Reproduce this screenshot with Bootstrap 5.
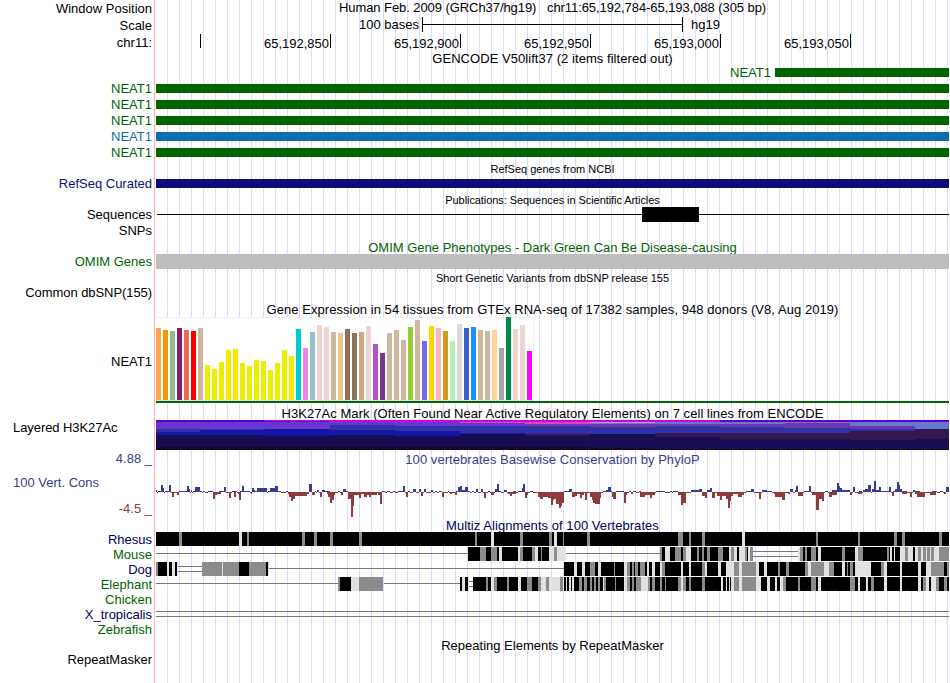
<!DOCTYPE html>
<html lang="en">
<head>
  <meta charset="UTF-8">
  <meta name="viewport" content="width=device-width, initial-scale=1.0">
  <title>chr11:65,192,784-65,193,088</title>
  <link href="https://cdn.jsdelivr.net/npm/bootstrap@5.3.0/dist/css/bootstrap.min.css" rel="stylesheet">
  <style>
    body { font-family: "Liberation Sans", Arial, sans-serif; font-size: 13px; color: #000; background: #fff; }
    .browser {
      width: 950px; height: 683px;
      background:
        linear-gradient(#ffb4b4, #ffb4b4) 154px 0 / 1px 100% no-repeat,
        repeating-linear-gradient(to right, transparent 0 11px, #dcdcfa 11px 12px) 156px 0 / 793px 100% no-repeat;
    }
    .track { height: 16px; line-height: 16px; white-space: nowrap; }
    .side { width: 156px; padding-right: 4px; flex: none; text-align: right; }
    .plot { width: 793px; flex: none; }
    .side-left { text-align: left; padding-left: 13px; }
    .h14 { height: 14px; }
    .h15 { height: 15px; line-height: 15px; }
    .h17 { height: 17px; line-height: 17px; }
    .h30 { height: 30px; line-height: 16px; }
    .line-13 { line-height: 13px; }
    .line-15 { line-height: 15px; }
    .line-17 { line-height: 17px; }
    .line-18 { line-height: 18px; }
    .line-19 { line-height: 19px; }
    .line-20 { line-height: 20px; }
    .wide { letter-spacing: .05px; }
    .tight { letter-spacing: -.07px; }
    .tiny { font-size: 11px; }
    .gene { height: 9px; margin-top: 4px; }
    .green { color: #006400; }
    .blue { color: #0c6eaf; }
    .navy { color: #0c0c78; }
    .species { color: #00005a; }
    .cons { color: #3c3c8c; }
    .red { color: #8c3c3c; }
    .bg-gene { background: #006400; }
    .bg-alt { background: #0c6eaf; }
    .bg-refseq { background: #0c0c78; }
    .bg-omim { background: #bebebe; height: 15px; }
    .ruler span { width: 130px; height: 14px; border-right: 1px solid #000; padding-right: 1px; text-align: right; line-height: 19px; flex: none; }
    .ruler span:first-child { width: 45px; }
    .scale-text { width: 266px; padding-right: 3px; text-align: right; }
    .gene-text { width: 619px; padding-right: 4px; text-align: right; }
    .gtex { height: 86px; }
    .gtex .side { line-height: 89px; }
    .phylop { height: 50px; line-height: 16px; }
    svg { display: block; shape-rendering: crispEdges; }
  </style>
</head>
<body>
  <div class="browser overflow-hidden">
    <div class="track h17 d-flex">
      <div class="side">Window Position</div>
      <div class="plot text-center tight line-15">Human Feb. 2009 (GRCh37/hg19) &nbsp; chr11:65,192,784-65,193,088 (305 bp)</div>
    </div>
    <div class="track h17 d-flex">
      <div class="side">Scale</div>
      <div class="plot d-flex line-15">
        <div class="scale-text">100 bases</div>
        <svg width="261" height="15"><path d="M0.5 0V15M260.5 0V15M0 7.5H261" stroke="#000" fill="none"/></svg>
        <div class="ps-2 ms-0">hg19</div>
      </div>
    </div>
    <div class="track d-flex line-18">
      <div class="side">chr11:</div>
      <div class="plot ruler d-flex"><span></span><span>65,192,850</span><span>65,192,900</span><span>65,192,950</span><span>65,193,000</span><span>65,193,050</span></div>
    </div>
    <div class="track h14 d-flex">
      <div class="side"></div>
      <div class="plot text-center wide line-18">GENCODE V50lift37 (2 items filtered out)</div>
    </div>
    <div class="track d-flex green line-18">
      <div class="side"></div>
      <div class="plot d-flex"><div class="gene-text">NEAT1</div><div class="gene bg-gene flex-grow-1"></div></div>
    </div>
    <div class="track d-flex green line-18"><div class="side">NEAT1</div><div class="plot gene bg-gene"></div></div>
    <div class="track d-flex green line-18"><div class="side">NEAT1</div><div class="plot gene bg-gene"></div></div>
    <div class="track d-flex green line-18"><div class="side">NEAT1</div><div class="plot gene bg-gene"></div></div>
    <div class="track d-flex blue line-18"><div class="side">NEAT1</div><div class="plot gene bg-alt"></div></div>
    <div class="track d-flex green line-18"><div class="side">NEAT1</div><div class="plot gene bg-gene"></div></div>

    <div class="track h15 d-flex">
      <div class="side"></div>
      <div class="plot text-center tiny line-18">RefSeq genes from NCBI</div>
    </div>
    <div class="track d-flex navy line-18"><div class="side">RefSeq Curated</div><div class="plot gene bg-refseq"></div></div>
    <div class="track h15 d-flex">
      <div class="side"></div>
      <div class="plot text-center tiny tight line-18">Publications: Sequences in Scientific Articles</div>
    </div>
    <div class="track d-flex line-18">
      <div class="side">Sequences</div>
      <svg class="plot" height="16" viewBox="156 206 793 16"><path d="M157 214.5H949" stroke="#000"/><rect x="642" y="207" width="57" height="15"/></svg>
    </div>
    <div class="track d-flex line-18"><div class="side">SNPs</div></div>
    <div class="track d-flex">
      <div class="side"></div>
      <div class="plot text-center green line-20">OMIM Gene Phenotypes - Dark Green Can Be Disease-causing</div>
    </div>
    <div class="track d-flex green"><div class="side">OMIM Genes</div><div class="plot bg-omim"></div></div>
    <div class="track h15 d-flex">
      <div class="side"></div>
      <div class="plot text-center tiny line-17">Short Genetic Variants from dbSNP release 155</div>
    </div>
    <div class="track d-flex"><div class="side tight">Common dbSNP(155)</div></div>
    <div class="track d-flex">
      <div class="side"></div>
      <div class="plot text-center wide line-18">Gene Expression in 54 tissues from GTEx RNA-seq of 17382 samples, 948 donors (V8, Aug 2019)</div>
    </div>
    <div class="track gtex d-flex">
      <div class="side">NEAT1</div>
      <svg id="gtex" class="plot" height="86" viewBox="156 317 793 86"></svg>
    </div>
    <div class="track h17 d-flex">
      <div class="side"></div>
      <div class="plot text-center wide pt-1 lh-1">H3K27Ac Mark (Often Found Near Active Regulatory Elements) on 7 cell lines from ENCODE</div>
    </div>
    <div class="track h30 d-flex">
      <div class="side side-left tight">Layered H3K27Ac</div>
      <svg id="h3k" class="plot" height="30" viewBox="156 420 793 30"></svg>
    </div>
    <div class="track h17 d-flex cons">
      <div class="side">4.88 _</div>
      <div class="plot text-center wide line-19">100 vertebrates Basewise Conservation by PhyloP</div>
    </div>
    <div class="track phylop d-flex">
      <div class="side d-flex flex-column justify-content-between">
        <div class="cons side-left pt-2">100 Vert. Cons</div>
        <div class="red">-4.5 _</div>
      </div>
      <svg id="phylop" class="plot" height="50" viewBox="156 467 793 50"></svg>
    </div>
    <div class="track h15 d-flex">
      <div class="side"></div>
      <div class="plot text-center species wide line-18">Multiz Alignments of 100 Vertebrates</div>
    </div>
    <div id="multiz"></div>
    <div class="track d-flex">
      <div class="side"></div>
      <div class="plot text-center line-18">Repeating Elements by RepeatMasker</div>
    </div>
    <div class="track h15 d-flex line-13"><div class="side">RepeatMasker</div></div>
  </div>

  <script src="https://cdn.jsdelivr.net/npm/bootstrap@5.3.0/dist/js/bootstrap.bundle.min.js"></script>
  <script>
    const rect = (x, y, w, h, fill) => `<rect x="${x}" y="${y}" width="${w}" height="${h}" fill="${fill}"/>`;

    // GTEx: one bar per tissue, [top, colour]
    const tan = '#cdb79e', rose = '#eed5d2', yellow = '#eeee00';
    const tissues = [
      [328, '#ffa54f'], [330, '#ee9a00'], [331, '#8fbc8f'], [328, '#8b1c62'], [330, '#ee6a50'], [331, '#ff0000'], [328, tan],
      ...[365, 369, 362, 350, 349, 363, 366, 360, 361, 370, 363, 350, 356].map(t => [t, yellow]),
      [329, '#00cdcd'], [348, '#ee82ee'], [332, '#9ac0cd'], [325, rose], [327, rose], [332, tan], [333, '#eec591'],
      [329, '#8b7355'], [333, '#8b7355'], [332, '#cdaa7d'], [326, rose], [344, '#b452cd'], [353, '#7a378b'],
      [333, tan], [330, tan], [340, tan], [327, '#9acd32'], [320, tan], [341, '#7a67ee'], [326, '#ffd700'],
      [328, '#ffb6c1'], [331, '#cd9b1d'], [341, '#b4eeb4'], [324, '#d9d9d9'], [328, '#3a5fcd'], [327, '#1e90ff'],
      [330, tan], [331, tan], [330, '#ffd39b'], [348, '#a6a6a6'], [317, '#008b45'], [329, rose], [325, rose], [351, '#ff00ff']
    ];
    let out = rect(156, 317, 378, 84, '#f0f0f0') + rect(157, 318, 376, 82, '#fff') + rect(156, 318, 1, 82, '#fff') + rect(156, 400, 378, 1, '#dcdcdc');
    tissues.forEach(([top, c], i) => out += rect(156 + i * 7, top, 5, 400 - top, c));
    document.getElementById('gtex').innerHTML = out + rect(156, 401, 793, 2, '#006400');

    // H3K27Ac: each segment is [x, layer, bottom, layer, bottom, ...]
    const ink = { V: '#5a00d2', M: '#d200dc', K: '#180828', P: '#6936d2', I: '#3030a8', B: '#1616a6', D: '#180c52', R: '#331850', L: '#6478d0', Q: '#6e38a8', N: '#d746c8', W: '#c896f0' };
    const layers = [
      [156, 'V422 P429 I432 B435 D447 K450'],
      [200, 'V422 P429 I430 B435 D447 K450'],
      [265, 'M421 V422 P429 B436 D447 K450'],
      [330, 'M422 P425 I430 B435 D447 K450'],
      [395, 'M422 P426 I431 B436 D447 K450'],
      [460, 'M422 N423 P426 I433 B434 D447 K450'],
      [525, 'M422 N424 Q426 I434 R436 D447 K450'],
      [590, 'M422 W423 L424 Q427 I434 D448 K450'],
      [655, 'M422 L424 Q426 I433 R437 D449 K450'],
      [720, 'V422 L424 Q427 I433 R439 D449 K450'],
      [785, 'V422 L423 Q428 I433 R439 D449 K450'],
      [850, 'V422 L426 Q429 I431 R440 D449 K450'],
      [915, 'V422 L429 R439 D449 K450'],
      [949, '']
    ];
    out = '';
    for (let i = 0; i < layers.length - 1; i++) {
      let y = 420;
      for (const s of layers[i][1].split(' ')) {
        const b = +s.slice(1);
        out += rect(layers[i][0], y, layers[i + 1][0] - layers[i][0], b - y, ink[s[0]]);
        y = b;
      }
    }
    document.getElementById('h3k').innerHTML = out;

    // PhyloP: x,width,height triples above and below the zero line
    const up = '156,1,2 158,3,1 161,2,7 163,1,4 165,4,1 169,2,7 179,8,1 187,2,6 189,1,3 191,1,2 193,2,1 195,5,5 200,2,1 203,2,1 208,5,1 219,5,1 224,2,5 232,5,1 240,2,1 242,2,6 244,6,1 252,2,4 254,1,2 255,2,1 257,10,4 268,2,1 270,5,4 275,3,6 278,3,1 286,2,1 309,3,8 315,1,1 317,2,2 322,3,2 325,5,1 338,2,1 343,3,3 346,2,1 382,3,1 387,3,1 393,2,1 398,5,1 403,2,6 408,2,1 413,3,3 419,2,3 424,2,3 431,2,2 435,2,1 439,3,1 448,1,1 456,2,1 458,2,5 460,2,6 462,3,2 465,3,5 468,2,1 472,2,1 476,2,3 481,2,3 488,2,1 495,2,3 497,2,8 499,2,1 504,3,2 513,3,1 518,4,1 522,1,4 523,2,8 530,3,1 564,5,1 569,3,3 603,3,1 606,2,2 608,3,5 611,1,1 616,8,1 629,2,1 633,3,1 639,2,1 656,9,1 670,2,1 673,5,1 691,8,2 699,3,3 707,3,2 710,2,4 746,5,1 751,3,3 762,5,2 767,5,1 790,3,3 795,1,2 796,2,6 804,5,1 809,2,6 825,3,1 832,5,2 837,2,9 839,1,6 840,2,4 842,8,2 853,2,5 859,3,1 863,2,2 865,3,3 868,3,7 872,2,3 874,2,11 876,3,2 879,2,5 881,8,1 889,2,5 893,2,1 895,2,3 897,2,10 899,1,7 900,2,3 902,5,1 913,2,2 915,5,1 932,5,1 940,3,1 946,3,5';
    const down = '172,2,5 177,2,3 213,2,7 215,2,3 217,4,2 229,2,6 234,2,5 238,1,2 239,2,8 251,1,2 288,1,2 289,2,5 291,2,9 293,2,7 295,6,4 301,6,4 307,2,2 312,3,3 320,2,5 327,1,2 328,2,5 330,2,11 332,2,8 334,1,3 341,2,3 348,3,7 351,2,23 353,1,14 354,5,3 359,2,6 361,3,2 364,3,5 367,6,3 369,2,5 373,4,3 378,2,3 380,2,12 406,2,5 421,2,4 442,2,5 450,2,2 455,2,3 484,2,6 491,3,3 508,2,2 510,2,4 512,4,2 525,2,6 527,1,3 538,2,5 540,3,7 543,5,5 548,3,6 551,2,13 553,1,8 554,2,7 556,3,12 559,2,16 561,1,14 562,2,11 572,3,5 575,2,4 577,3,2 580,2,6 582,2,3 585,2,8 590,2,5 592,1,8 593,2,11 595,5,12 600,1,6 612,2,5 613,3,7 624,2,11 626,1,3 631,2,2 640,5,5 645,5,3 650,2,6 652,3,3 678,3,3 681,2,13 683,3,11 702,3,4 705,2,6 712,3,6 717,3,4 720,2,8 722,4,4 726,2,7 728,2,16 730,1,9 731,2,4 733,5,2 738,4,5 742,2,3 759,2,7 774,2,2 775,7,5 782,3,8 788,2,2 798,5,4 812,4,3 816,3,18 819,3,7 822,2,9 829,3,5 832,5,3 850,2,3 858,4,2 892,2,4 902,5,2 910,2,5 915,2,2 917,8,5 930,6,3 944,2,2';
    const parse = s => s.split(' ').map(t => t.split(',').map(Number));
    const ups = parse(up);
    out = '';
    for (let x = 156; x < 949; x++) {
      if (!ups.some(u => x >= u[0] && x < u[0] + u[1])) out += rect(x, 492, 1, 1, '#8c3c3c');
    }
    ups.forEach(([x, w, h]) => out += rect(x, 492 - h, w, h, '#3c3c8c'));
    parse(down).forEach(([x, w, h]) => out += rect(x, 492, w, h, '#8c3c3c'));
    document.getElementById('phylop').innerHTML = out + rect(351, 515, 2, 2, '#ff00ff');

    // Multiz: k black, g grey, l light block; s single, d double gap line; n nothing
    const species = [
      ['Rhesus', 'species', 'k156 g179 k182 l239 k242 g247 k249 g302 k305 g314 k317 g330 k333 g359 k362 g475 k477 l491 k494 g520 k523 g549 k552 l554 k557 g563 k564 g587 k590 g678 k683 g689 k691 g702 k705 l742 k745 g816 k818 g858 k860 g894 k897 g902 k905 g939 k942'],
      ['Mouse', 'green', 's156 k468 g480 k486 g491 k497 l499 k502 l518 g520 k523 g532 l535 k538 g541 k542 l543 k543 l549 g554 l557 s566 g660 k662 l665 k670 g675 k681 g683 l686 k691 g697 k699 g702 k704 g707 k710 g718 k723 l729 g731 l734 k737 l739 g745 k747 l748 g750 d753 l798 g800 k803 g805 k807 g811 k816 l818 k821 g842 k845 l855 g858 k863 g887 k889 l890 k892 l894 k895 l900 g905 l908 k913 l915 g918 l921 g923 l926 g927 l930 g931 l934 g939'],
      ['Dog', 'species', 'g156 k158 l167 k169 l172 k175 l177 d178 g202 l222 g223 k239 g249 k266 l268 s269 k564 l574 k577 l582 k585 g590 k595 l598 k601 g614 k615 l624 g627 k630 g632 k634 g635 k638 g640 k645 l647 k649 l652 k655 l660 g662 k665 l681 k683 l689 k691 g702 l705 k707 l718 k721 l726 g734 l739 g742 l756 k759 l764 k767 g778 k780 g786 k789 g805 l808 g811 l824 g829 k834 l842 k845 g847 k848 g850 k853 l855 k871 g881 l884 k887 l900 k902 l918 k921 l926 g931 k944 g947'],
      ['Elephant', 'green', 's156 g338 k340 l351 g359 n383 s384 k460 l462 k465 l468 d469 k473 g486 k488 l491 g494 k497 g507 k509 l518 k521 g527 k532 g538 l541 g546 l549 g560 l563 k564 l566 k567 l569 k571 l572 k574 g579 k582 g584 k587 g590 k592 g594 k596 g598 k600 l603 g604 k606 g615 k616 l624 g627 k630 g632 k634 g636 l641 g648 k650 g652 k655 g660 k662 g665 k666 g678 l681 g683 k686 g689 k691 g702 k705 l721 k723 l726 k727 l729 k730 l731 g734 l739 g742 l756 k761 l767 k770 l775 k777 l780 g783 k786 g798 k800 g811 k816 l818 k821 g850 k855 l858 k860 l866 k868 g871 k874 l884 k887 l900 k902 l918 k921 g923 l926 k929 l931 g936 k939 g944 k947'],
      ['Chicken', 'green', 'n156'],
      ['X_tropicalis', 'species', 'd156'],
      ['Zebrafish', 'green', 'n156']
    ];
    const tone = { k: '#000', g: '#8c8c8c', l: '#e1e1e1' };
    document.getElementById('multiz').innerHTML = species.map(([name, cls, code]) => {
      const runs = code.split(' ').map(t => [t[0], +t.slice(1)]);
      let svg = '';
      runs.forEach(([t, x], i) => {
        const w = (runs[i + 1] ? runs[i + 1][1] : 949) - x;
        if (tone[t]) svg += rect(x, 0, w, 14, tone[t]);
        if (t === 's') svg += rect(x, 6, w, 1, '#787878');
        if (t === 'd') svg += rect(x, 4, w, 1, '#787878') + rect(x, 9, w, 1, '#787878');
      });
      return `<div class="track h15 d-flex"><div class="side ${cls}">${name}</div><svg class="plot" height="15" viewBox="156 0 793 15">${svg}</svg></div>`;
    }).join('');
  </script>
</body>
</html>
